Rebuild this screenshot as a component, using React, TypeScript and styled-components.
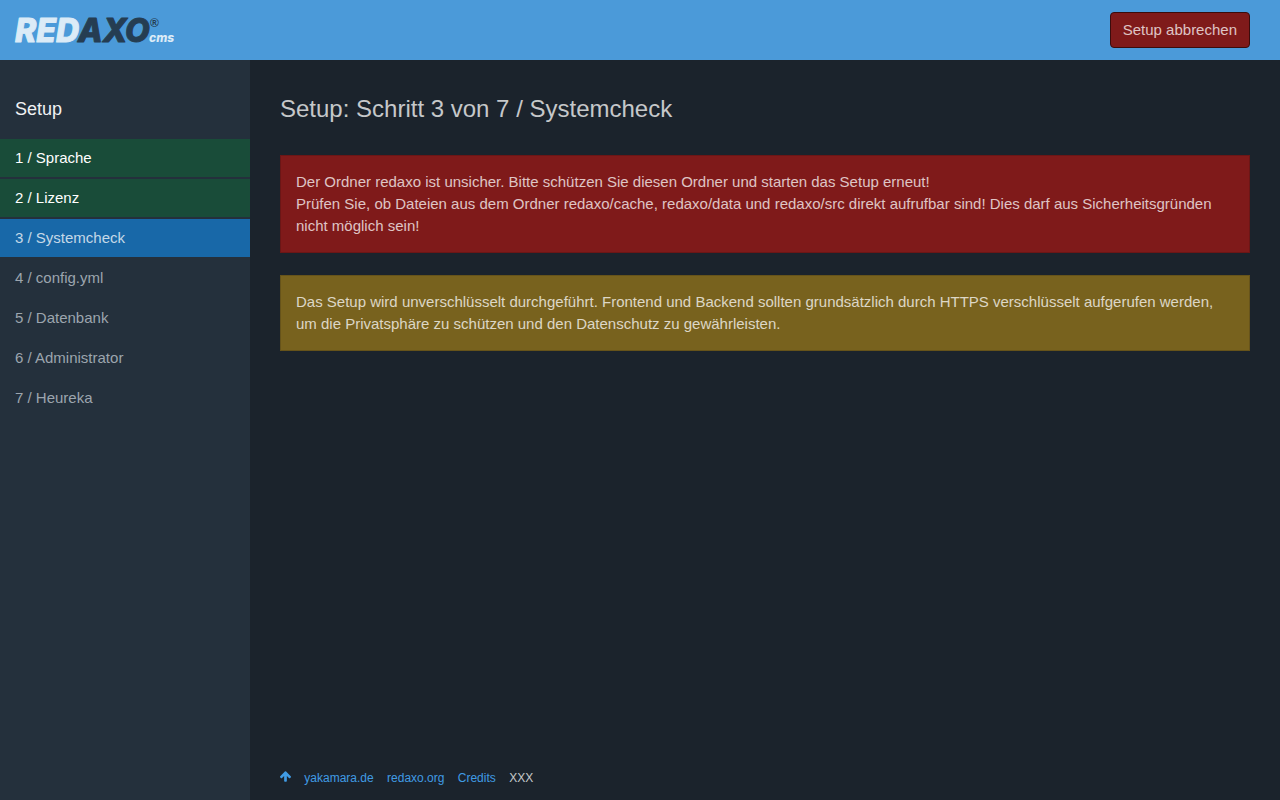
import React from 'react';
import styled, { createGlobalStyle, css } from 'styled-components';

const GlobalStyle = createGlobalStyle`
  *, *::before, *::after { box-sizing: border-box; }
  body {
    margin: 0;
    background: #1b232c;
    color: rgba(255, 255, 255, 0.75);
    font: 15px/22px "Liberation Sans", Arial, sans-serif;
  }
`;

const Page = styled.div`
  display: flex;
  flex-direction: column;
  min-height: 100vh;
`;

const Header = styled.header`
  display: flex;
  align-items: center;
  justify-content: space-between;
  height: 60px;
  padding: 0 30px 0 15px;
  background: #4b9ad9;
`;

const LogoLink = styled.a`
  display: block;
  height: 24px;

  svg {
    display: block;
    overflow: visible;
  }
`;

const Wordmark = styled.text`
  font: italic 800 32px Inter, "Liberation Sans", sans-serif;
  stroke-width: 1px;
  stroke-linejoin: round;
`;

const LogoSuffix = styled.text`
  font: italic 800 12px Inter, "Liberation Sans", sans-serif;
`;

const LogoMark = styled.text`
  font: 700 12px "Liberation Sans", sans-serif;
`;

const AbortButton = styled.button`
  height: 36px;
  padding: 0 12px;
  border: 1px solid #3b0c0c;
  border-radius: 4px;
  background: #7f1a1a;
  color: rgba(255, 255, 255, 0.75);
  font: inherit;
  cursor: pointer;
`;

const Body = styled.div`
  display: flex;
  flex: 1;
`;

const Sidebar = styled.nav`
  flex: 0 0 250px;
  padding-top: 38px;
  background: #24303c;
`;

const SidebarTitle = styled.h4`
  margin: 0 0 19px;
  padding: 0 15px;
  color: #f0f2f4;
  font-size: 18px;
  font-weight: 400;
  line-height: 22px;
`;

const Steps = styled.ol`
  display: flex;
  flex-direction: column;
  gap: 2px;
  margin: 0;
  padding: 0;
  list-style: none;
`;

type StepState = 'done' | 'active' | 'open';

const stepStyles = {
  done: css`
    background: #194c39;
    color: #fff;
  `,
  active: css`
    background: #1868a8;
    color: rgba(255, 255, 255, 0.75);
  `,
  open: css`
    color: #9ca5ae;
  `,
};

const Step = styled.li<{ $state: StepState }>`
  padding: 8px 15px;
  ${({ $state }) => stepStyles[$state]}
`;

const Main = styled.div`
  display: flex;
  flex: 1;
  flex-direction: column;
  min-width: 0;
  padding: 36px 30px 11px;
`;

const Content = styled.main`
  flex: 1;
`;

const Title = styled.h1`
  margin: 0 0 33px;
  font-size: 24px;
  font-weight: 400;
  line-height: 26px;
`;

const Alert = styled.div<{ $tone: 'error' | 'warning' }>`
  margin-bottom: 22px;
  padding: 15px;
  border: 1px solid ${({ $tone }) => ($tone === 'error' ? '#6b1616' : '#66531a')};
  background: ${({ $tone }) => ($tone === 'error' ? '#7f1a1a' : '#78621e')};
`;

const Footer = styled.footer`
  font-size: 12px;
  line-height: 22px;
`;

const FooterItem = styled.span`
  display: inline-block;
  margin-right: 10px;
`;

const FooterLink = styled.a`
  color: #409be4;
  text-decoration: none;
`;

const Logo = () => (
  <svg width="160" height="24" viewBox="0 0 160 24" role="img" aria-label="REDAXO cms">
    <Wordmark x="0" y="24" fill="#dbebf7" stroke="#dbebf7">RED</Wordmark>
    <Wordmark x="63" y="24" fill="#253d52" stroke="#253d52">AXO</Wordmark>
    <LogoMark x="135" y="9" fill="#253d52">®</LogoMark>
    <LogoSuffix x="134" y="24" fill="#dbebf7">cms</LogoSuffix>
  </svg>
);

const ArrowUp = () => (
  <svg width="11" height="11" viewBox="117 192 1558 1472" fill="currentColor" aria-hidden="true">
    <path d="M1675 971q0 51-37 90l-75 75q-38 38-91 38-54 0-90-38l-294-293v704q0 52-37.500 84.500t-90.500 32.500h-128q-53 0-90.500-32.500t-37.500-84.500v-704l-294 293q-36 38-90 38t-90-38l-75-75q-38-38-38-90 0-53 38-91l651-651q35-37 90-37 54 0 91 37l651 651q37 39 37 91z" />
  </svg>
);

const steps: { label: string; state: StepState }[] = [
  { label: '1 / Sprache', state: 'done' },
  { label: '2 / Lizenz', state: 'done' },
  { label: '3 / Systemcheck', state: 'active' },
  { label: '4 / config.yml', state: 'open' },
  { label: '5 / Datenbank', state: 'open' },
  { label: '6 / Administrator', state: 'open' },
  { label: '7 / Heureka', state: 'open' },
];

export default function App() {
  return (
    <Page>
      <GlobalStyle />
      <Header>
        <LogoLink href="#start">
          <Logo />
        </LogoLink>
        <AbortButton type="button">Setup abbrechen</AbortButton>
      </Header>
      <Body>
        <Sidebar>
          <SidebarTitle>Setup</SidebarTitle>
          <Steps>
            {steps.map(({ label, state }) => (
              <Step key={label} $state={state}>{label}</Step>
            ))}
          </Steps>
        </Sidebar>
        <Main>
          <Content>
            <Title>Setup: Schritt 3 von 7 / Systemcheck</Title>
            <Alert $tone="error">
              Der Ordner redaxo ist unsicher. Bitte schützen Sie diesen Ordner und starten das Setup erneut!
              <br />
              Prüfen Sie, ob Dateien aus dem Ordner redaxo/cache, redaxo/data und redaxo/src direkt aufrufbar sind! Dies darf aus Sicherheitsgründen nicht möglich sein!
            </Alert>
            <Alert $tone="warning">
              Das Setup wird unverschlüsselt durchgeführt. Frontend und Backend sollten grundsätzlich durch HTTPS verschlüsselt aufgerufen werden, um die Privatsphäre zu schützen und den Datenschutz zu gewährleisten.
            </Alert>
          </Content>
          <Footer>
            <FooterItem><FooterLink href="#top" aria-label="Nach oben"><ArrowUp /></FooterLink></FooterItem>{' '}
            <FooterItem><FooterLink href="#yakamara">yakamara.de</FooterLink></FooterItem>{' '}
            <FooterItem><FooterLink href="#redaxo">redaxo.org</FooterLink></FooterItem>{' '}
            <FooterItem><FooterLink href="#credits">Credits</FooterLink></FooterItem>{' '}
            <FooterItem>XXX</FooterItem>
          </Footer>
        </Main>
      </Body>
    </Page>
  );
}
